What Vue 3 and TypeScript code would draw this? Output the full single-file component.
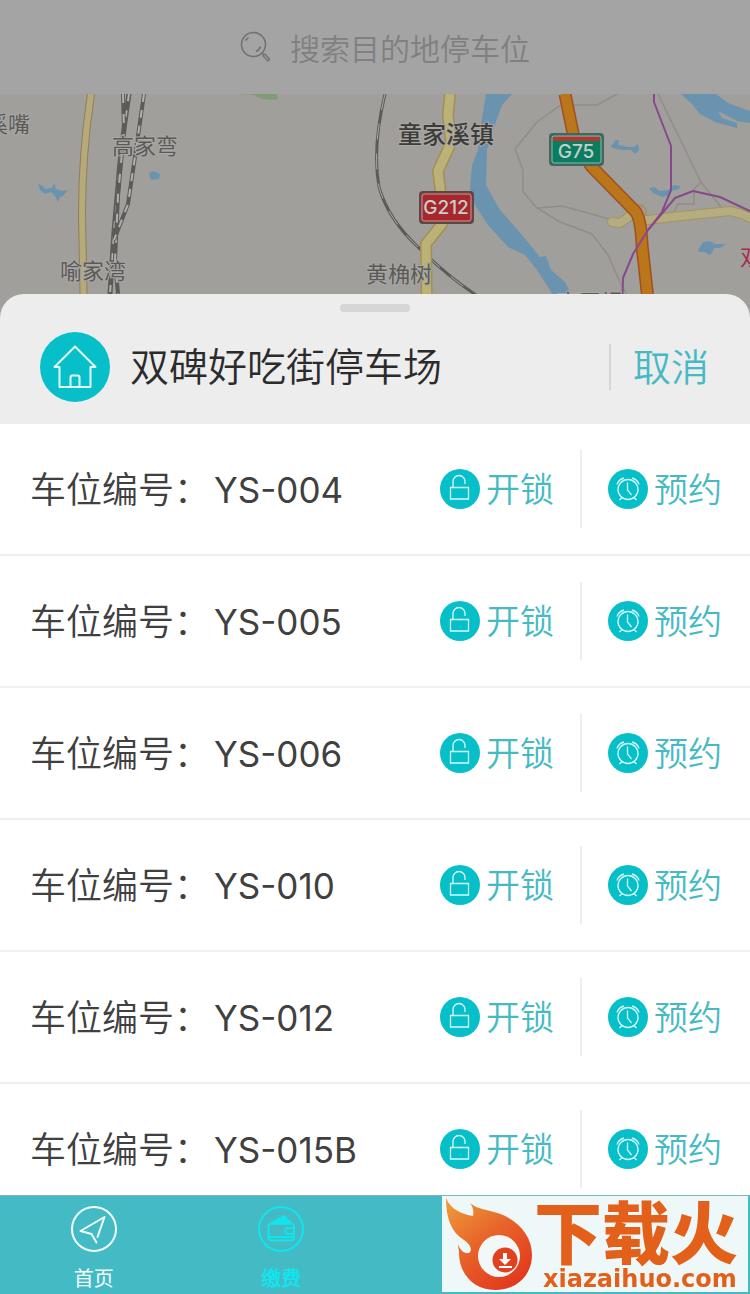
<script setup lang="ts">
import { ref } from 'vue'

interface Tab {
  id: string
  label: string
}

const keyword = ref('')
const spaces: string[] = ['YS-004', 'YS-005', 'YS-006', 'YS-010', 'YS-012', 'YS-015B']
const tabs: Tab[] = [
  { id: 'home', label: '首页' },
  { id: 'pay', label: '缴费' },
]
const active = ref('pay')
</script>

<template>
  <div class="page">
    <header class="search">
      <label class="search-box">
        <svg class="search-icon" viewBox="0 0 32 32" aria-hidden="true">
          <circle cx="13.5" cy="13.5" r="12" />
          <path d="M5.5 9.5 L8.5 6.5 M20.5 15.5 Q19.5 19 16 20.5" />
          <path d="M22 22 l1.8 1.8" />
          <path d="M23.4 25.2 q-0.6-1.8 1.6-2 l4.2 4.4 q0.6 2-1.6 2.2 z" />
        </svg>
        <input v-model="keyword" type="text" placeholder="搜索目的地停车位" aria-label="搜索目的地停车位" />
      </label>
    </header>

    <section class="map" aria-label="地图">
      <svg class="map-art" viewBox="0 94 750 224" preserveAspectRatio="xMidYMin slice">
        <rect x="0" y="94" width="750" height="224" fill="#a09f9b" />
        <path d="M241 94 h36 l1 5 q-13 3-24-4 z" fill="#819d77" />
        <g fill="#6a93b0">
          <path d="M38 184 l5 2 2 3 7-1 2-5 2 6 6 2 6-1-5 6-3 1-2 5-3-6-4-4-4 1-2 1-5-4z" />
          <path d="M149 173 l4-2 7 3-1 5-8 1z" />
          <path d="M486 94 L481 125 478 150 472 165 470 190 475 205 488 225 508 247 525 255 537 270 550 290 560 312 578 312 571 294 565 282 551 270 546 256 540 257 522 235 500 210 486 185 487 150 493 130 502 105 512 94 z" />
          <path d="M681 94 L716 94 728 103 750 111 750 123 737 121 718 111 722 118 737 123 737 128 715 122 700 114 692 104 z" />
          <path d="M611 146 l5-6 3 0-1 5 10 2 6 0 4-3 1 6-4 4-4-4-8 0-7-1-5-2z" />
          <path d="M649 188 l6-1 4 4 9-1 6-5 6 1-1 3-8 2-1 4-8 2-9-4z" />
          <path d="M698 250 l5-8 7-1 5 3 11 0-6 4-6 0-2 5-3 2-4-3-6 0z" />
        </g>
        <g fill="none" stroke="#948d87" stroke-width="1.5">
          <path d="M617 94 L597 105 H561 L537 122 515 149 523 170 523 192 537 208 560 222 592 234 608 255 620 282 630 300" />
          <path d="M537 208 L562 206 588 213 612 220 M658 94 L701 182 725 212 M701 182 L694 189 V204 H678 L673 214" />
        </g>
        <g fill="none" stroke-linejoin="round">
          <path d="M129 94 q-9 60-11 92 l-4 46-4 62" stroke="#5c5b59" stroke-width="5" />
          <path d="M129 94 q-9 60-11 92 l-4 46-4 62" stroke="#b1b0ac" stroke-width="2" stroke-dasharray="7 9" />
          <path d="M123 94 l1 36-6 66-3 64 3 34" stroke="#5c5b59" stroke-width="4" />
          <path d="M123 94 l1 36-6 66-3 64 3 34" stroke="#b1b0ac" stroke-width="2" stroke-dasharray="9 11" />
          <path d="M144 94 l-8 56-8 54-14 36" stroke="#5c5b59" stroke-width="4" />
          <path d="M144 94 l-8 56-8 54-14 36" stroke="#b1b0ac" stroke-width="2" stroke-dasharray="8 8" />
          <path d="M385 94 q-13 54-6 93 q9 32 39 60 q28 28 58 48" stroke="#5c5b59" stroke-width="3" />
          <path d="M385 94 q-13 54-6 93 q9 32 39 60 q28 28 58 48" stroke="#aaa9a5" stroke-width="1" stroke-dasharray="16 14" />
          <path d="M91 94 q-9 60-9 120 l2 104" stroke="#917d5e" stroke-width="8" />
          <path d="M91 94 q-9 60-9 120 l2 104" stroke="#b5aa78" stroke-width="6" />
          <path d="M450 94 L448 115 451 143 438 171 443 211 442 224 426 244 427 318" stroke="#a58e55" stroke-width="12" />
          <path d="M450 94 L448 115 451 143 438 171 443 211 442 224 426 244 427 318" stroke="#bab276" stroke-width="9" />
          <path d="M632 213 Q634 202 643 206 Q649 211 643 220" stroke="#a39460" stroke-width="2" />
          <path d="M612 222 L620 223 630 216 M640 221 L672 217 730 211 Q742 213 752 219" stroke="#a39460" stroke-width="10" stroke-linecap="round" />
          <path d="M612 222 L620 223 630 216 M640 221 L672 217 730 211 Q742 213 752 219" stroke="#b5ad80" stroke-width="8" stroke-linecap="round" />
          <path d="M565 94 L574 138 591 166 635 211 Q641 218 642 245 L650 318" stroke="#a34e20" stroke-width="13" />
          <path d="M565 94 L574 138 591 166 635 211 Q641 218 642 245 L650 318" stroke="#b9761b" stroke-width="10" />
          <path d="M654 94 V102 L671 146 V190 L662 212 648 230 633 254 623 278 622 312" stroke="#87498b" stroke-width="2" />
          <path d="M648 230 L675 198 693 191 720 197 752 212" stroke="#87498b" stroke-width="2" />
        </g>
        <g class="place">
          <text x="-14" y="132">溪嘴</text>
          <text x="112" y="154">高家弯</text>
          <text x="60" y="279">喻家湾</text>
          <text x="366" y="282">黄桷树</text>
          <text x="557" y="310">高王坝</text>
        </g>
        <text class="town" x="398" y="143">童家溪镇</text>
        <text class="station" x="740" y="265">双</text>
        <g class="shield">
          <rect x="420" y="192" width="53" height="31" rx="3" fill="#a8272d" stroke="#5e4644" stroke-width="2" />
          <rect x="422" y="194" width="49" height="27" rx="2" fill="none" stroke="#b8a4a1" />
          <text x="446" y="214">G212</text>
          <rect x="550" y="134" width="53" height="31" rx="3" fill="#0b7c60" stroke="#49645d" stroke-width="2" />
          <rect x="553" y="136" width="47" height="5" fill="#b03a32" />
          <rect x="552" y="136" width="49" height="27" rx="2" fill="none" stroke="#9db5ab" />
          <text x="576" y="158">G75</text>
        </g>
      </svg>
    </section>

    <main class="sheet">
      <div class="sheet-head">
        <span class="handle"></span>
        <svg class="house" viewBox="0 0 70 70" aria-hidden="true">
          <circle cx="35" cy="35" r="35" />
          <path d="M35 14.5 L14.5 35 h5 v20 h31 v-20 h5 z M30.5 55 v-9.5 q0-2 2-2 h5 q2 0 2 2 V55" />
        </svg>
        <h1>双碑好吃街停车场</h1>
        <button type="button" class="cancel">取消</button>
      </div>

      <ul class="list">
        <li v-for="space in spaces" :key="space" class="row">
          <span class="number">车位编号：<span class="code">{{ space }}</span></span>
          <button type="button" class="action">
            <svg viewBox="0 0 40 40" aria-hidden="true">
              <circle cx="20" cy="20" r="20" />
              <path d="M10.500 18.500 h18 v11.500 h-18 z M13 18.500 v-6 a6 6 0 0 1 12 0 v2.500" />
            </svg>
            <span>开锁</span>
          </button>
          <span class="divider"></span>
          <button type="button" class="action">
            <svg viewBox="0 0 40 40" aria-hidden="true">
              <circle cx="20" cy="20" r="20" />
              <path d="M30 20.500 a10 10 0 1 1 -20 0 a10 10 0 1 1 20 0 M19.500 13.500 v7.500 l4 5 M9 15.500 q1.500-5 7-6.500 M31 15.500 q-1.500-5-7-6.500 M14 28.500 l-2.500 2.500 M26 28.500 l2.500 2.500" />
            </svg>
            <span>预约</span>
          </button>
        </li>
      </ul>
    </main>

    <nav class="tabs">
      <button
        v-for="tab in tabs"
        :key="tab.id"
        type="button"
        class="tab"
        :class="{ active: active === tab.id }"
        @click="active = tab.id"
      >
        <svg viewBox="0 0 46 46" aria-hidden="true">
          <circle cx="23" cy="23" r="22" />
          <path v-if="tab.id === 'home'" d="M26.500 31 L33.500 11 L9.500 25 L20.500 28 L25.500 36.500" />
          <template v-else>
            <path d="M13 17.500 h20 q3 0 3 3 v11 q0 3-3 3 h-20 q-2.500 0-2.500-3 v-11 q0-3 2.500-3 z M36 22 h-7 q-4 3 0 6 h7 M11 31 h25" />
            <path class="solid" d="M13 17.500 L26 10 L33 17.500 z" />
          </template>
        </svg>
        <span>{{ tab.label }}</span>
      </button>
      <a class="promo" href="#">
        <svg class="flame" viewBox="0 0 90 96" aria-hidden="true">
          <defs>
            <linearGradient id="fire" x1="0" y1="0" x2="0.7" y2="1">
              <stop offset="0" stop-color="#eda03a" />
              <stop offset="0.5" stop-color="#e8642a" />
              <stop offset="1" stop-color="#e23a1e" />
            </linearGradient>
          </defs>
          <path fill="url(#fire)" d="M4 2 C9 14 20 18 31 20 C32 15 31 11 28 7 C36 14 49 14 61 19 C79 27 90 42 90 59 C90 79 75 94 53 94 C31 94 17 77 17 57 C17 54 16 51 16 48 C18 54 22 58 27 57 C31 54 28 48 22 44 C9 36 4 22 4 2 Z" />
          <circle cx="57" cy="60" r="21" fill="#f1f8f7" />
          <circle cx="63" cy="64" r="12.500" fill="#e2411f" />
          <path fill="#fff" d="M61 57 h4 v6 h4 l-6 6 -6-6 h4 z M57 70 h13 v2 h-13 z" />
        </svg>
        <span class="promo-text">
          <strong>下载火</strong>
          <small>xiazaihuo.com</small>
        </span>
      </a>
    </nav>
  </div>
</template>

<style>
body {
  margin: 0;
}
</style>

<style scoped>
.page {
  display: flex;
  flex-direction: column;
  height: 100vh;
  overflow: hidden;
  background: #fff;
  font-family: Inter, "Noto Sans CJK SC", sans-serif;
}
button {
  padding: 0;
  border: 0;
  background: none;
  font: inherit;
  color: inherit;
  cursor: pointer;
}
.search {
  flex: none;
  display: flex;
  justify-content: center;
  height: 94px;
  padding-left: 28px;
  background: #a4a4a4;
}
.search-box {
  display: flex;
  align-items: center;
  gap: 18px;
}
.search-icon {
  width: 32px;
  height: 32px;
  fill: none;
  stroke: #707070;
  stroke-width: 1.5;
}
.search input {
  width: 248px;
  padding: 0;
  border: 0;
  outline: 0;
  background: none;
  font: 30px/44px "Noto Sans CJK SC", sans-serif;
  font-weight: 350;
  color: #555;
}
.search input::placeholder {
  color: #808080;
  opacity: 1;
}
.map {
  flex: none;
  height: 224px;
}
.map-art {
  display: block;
  width: 100%;
  height: 100%;
}
.map text {
  font-family: "Noto Sans CJK SC", sans-serif;
}
.place {
  font-size: 22px;
  fill: #5b5a58;
  stroke: #a9a8a4;
  stroke-width: 2;
  paint-order: stroke;
}
.town {
  font-size: 24px;
  font-weight: 500;
  fill: #3c3c3b;
  stroke: #a9a8a4;
  stroke-width: 2;
  paint-order: stroke;
}
.station {
  font-size: 22px;
  fill: #a32d4e;
}
.map .shield text {
  font-family: Inter, sans-serif;
  font-size: 19px;
  font-weight: 500;
  text-anchor: middle;
  fill: #c5cfca;
}
.sheet {
  flex: 1;
  min-height: 0;
  display: flex;
  flex-direction: column;
  margin-top: -24px;
  position: relative;
}
.sheet-head {
  flex: none;
  position: relative;
  box-sizing: border-box;
  display: flex;
  align-items: center;
  height: 130px;
  padding: 16px 41px 0 40px;
  border-radius: 24px 24px 0 0;
  background: #ededed;
}
.handle {
  position: absolute;
  top: 10px;
  left: 50%;
  width: 70px;
  height: 8px;
  margin-left: -35px;
  border-radius: 4px;
  background: #d6d6d6;
}
.house {
  width: 70px;
  height: 70px;
}
.house circle,
.action circle {
  fill: #06bfc8;
}
.house path {
  fill: none;
  stroke: #e4ffff;
  stroke-width: 2;
  stroke-linejoin: round;
}
h1 {
  flex: 1;
  margin: 0 0 0 20px;
  font-size: 39px;
  line-height: 46px;
  font-weight: 350;
  color: #2b2b2b;
  white-space: nowrap;
}
.cancel {
  padding-left: 22px;
  border-left: 2px solid #d6d6d6;
  font-size: 38px;
  line-height: 46px;
  font-weight: 350;
  color: #46bac4;
}
.list {
  flex: 1;
  min-height: 0;
  margin: 0;
  padding: 0;
  overflow-y: auto;
  scrollbar-width: none;
  list-style: none;
  background: #fff;
}
.row {
  box-sizing: border-box;
  display: flex;
  align-items: center;
  height: 132px;
  padding: 0 28px 0 30px;
  border-bottom: 2px solid #f0f0f0;
}
.number {
  flex: 1;
  display: flex;
  align-items: baseline;
  gap: 4px;
  padding-top: 2px;
  font-size: 36px;
  line-height: 52px;
  font-weight: 350;
  color: #404040;
  white-space: nowrap;
}
.code {
  font-size: 35px;
  font-weight: 400;
}
.action {
  display: flex;
  align-items: center;
  gap: 6px;
  font-size: 34px;
  line-height: 50px;
  font-weight: 350;
  color: #46bac4;
}
.action span {
  padding-top: 2px;
}
.action svg {
  width: 40px;
  height: 40px;
}
.action path {
  fill: none;
  stroke: #d6fbfc;
  stroke-width: 1.3;
}
.divider {
  width: 2px;
  height: 78px;
  margin: 0 26px;
  background: #eee;
}
.tabs {
  flex: none;
  position: relative;
  box-sizing: border-box;
  display: grid;
  grid-template-columns: repeat(4, 1fr);
  height: 99px;
  padding-top: 10px;
  border-top: 1px solid #7fb5ba;
  background: #44bac4;
}
.tab {
  display: flex;
  flex-direction: column;
  align-items: center;
  gap: 12px;
  font-size: 20px;
  line-height: 30px;
  color: #f0ffff;
}
.tab svg {
  width: 46px;
  height: 46px;
  fill: none;
  stroke: currentColor;
  stroke-width: 2;
  stroke-linejoin: round;
  stroke-linecap: round;
}
.tab.active {
  color: #12e4ee;
}
.tab.active span {
  font-weight: 700;
}
.solid {
  fill: currentColor;
}
.promo {
  position: absolute;
  right: 2px;
  bottom: 2px;
  display: flex;
  width: 306px;
  height: 96px;
  background: #eff8f8;
  color: #e2601a;
  text-decoration: none;
}
.flame {
  width: 90px;
  height: 96px;
}
.promo-text {
  display: flex;
  flex-direction: column;
}
.promo strong {
  padding-left: 2px;
  font: 900 68px/68px "Noto Sans CJK SC", sans-serif;
}
.promo small {
  margin-top: 5px;
  padding-left: 11px;
  font: 700 24px/20px "DejaVu Sans", sans-serif;
}
</style>
